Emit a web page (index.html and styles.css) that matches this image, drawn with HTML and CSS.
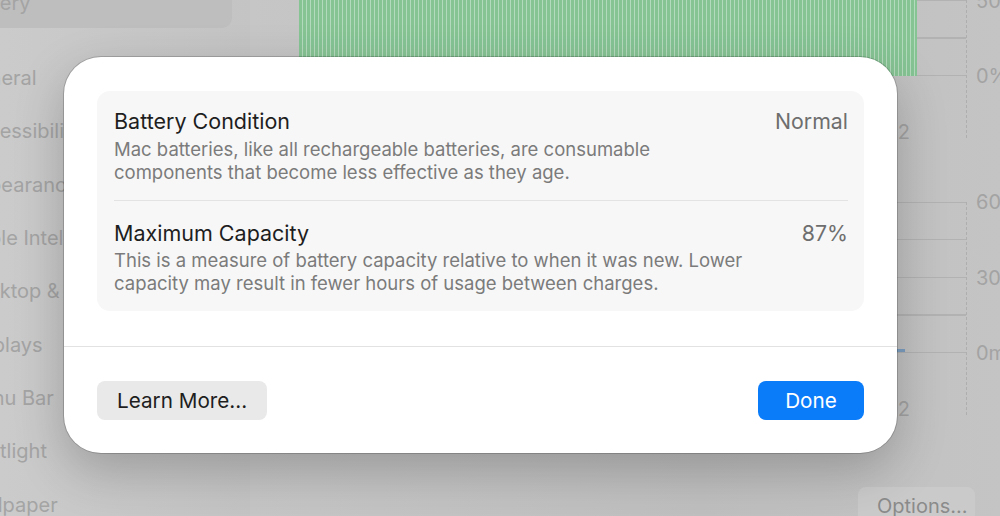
FILE: index.html
```html
<!DOCTYPE html>
<html lang="en">
<head>
    <meta charset="UTF-8">
    <meta name="viewport" content="width=device-width, initial-scale=1.0">
    <title>Battery Health</title>
    <link rel="stylesheet" href="styles.css">
</head>
<body>
    <div class="window">
        <div class="sidebar">
            <div class="sidebar-list">
                <div class="sidebar-item selected">Battery</div>
                <div class="sidebar-item">General</div>
                <div class="sidebar-item">Accessibility</div>
                <div class="sidebar-item">Appearance</div>
                <div class="sidebar-item">Apple Intelligence</div>
                <div class="sidebar-item">Desktop &amp; Dock</div>
                <div class="sidebar-item">Displays</div>
                <div class="sidebar-item">Menu Bar</div>
                <div class="sidebar-item">Spotlight</div>
                <div class="sidebar-item">Wallpaper</div>
            </div>
        </div>

        <div class="main">
            <div class="chart">
                <div class="plot-wrap">
                    <div class="plot">
                        <div class="level-bars"></div>
                    </div>
                    <div class="xlabels"><span>12</span></div>
                </div>
                <div class="ylabels">
                    <span>100%</span>
                    <span>50%</span>
                    <span>0%</span>
                </div>
            </div>

            <div class="chart second">
                <div class="plot-wrap">
                    <div class="plot usage">
                        <div class="usage-bar"></div>
                    </div>
                    <div class="xlabels"><span>12</span></div>
                </div>
                <div class="ylabels">
                    <span>60m</span>
                    <span>30m</span>
                    <span>0m</span>
                </div>
            </div>

            <button class="options-btn">Options...</button>
        </div>
    </div>

    <div class="sheet">
        <div class="group">
            <div class="row">
                <div class="row-text">
                    <div class="row-title">Battery Condition</div>
                    <div class="row-desc">Mac batteries, like all rechargeable batteries, are consumable<br>components that become less effective as they age.</div>
                </div>
                <div class="row-value">Normal</div>
            </div>
            <div class="divider"></div>
            <div class="row">
                <div class="row-text">
                    <div class="row-title">Maximum Capacity</div>
                    <div class="row-desc">This is a measure of battery capacity relative to when it was new. Lower<br>capacity may result in fewer hours of usage between charges.</div>
                </div>
                <div class="row-value">87%</div>
            </div>
        </div>
        <div class="sheet-footer">
            <button class="btn">Learn More...</button>
            <button class="btn primary">Done</button>
        </div>
    </div>
</body>
</html>
```

FILE: styles.css
```css
body {
    margin: 0;
    width: 1000px;
    height: 516px;
    overflow: hidden;
    position: relative;
    font-family: Inter, "Noto Sans", sans-serif;
    background-color: #c3c3c3;
}
.window {
    display: flex;
    height: 516px;
}

/* dimmed settings window behind the sheet */
.sidebar {
    width: 250px;
    flex-shrink: 0;
    background: linear-gradient(to right, #cbcbcb, #c4c4c4);
    overflow: hidden;
}
.sidebar-list {
    margin: -22px 18px 0 -60px;
}
.sidebar-item {
    height: 53.3px;
    padding-left: 23px;
    display: flex;
    align-items: center;
    font-size: 20px;
    color: #a4a4a4;
    white-space: nowrap;
}
.sidebar-item.selected {
    height: 50px;
    margin-bottom: 23.5px;
    background-color: #bebebe;
    border-radius: 10px;
}
.main {
    flex: 1;
    min-width: 0;
    overflow: hidden;
    display: flex;
    flex-direction: column;
    margin-top: -75px;
    background: linear-gradient(to right, #c6c6c6, #bfbfbf 60%, #c4c4c4);
}
.chart {
    display: flex;
    margin-left: 49px;
}
.chart.second {
    margin-top: 64px;
}
.plot-wrap {
    width: 667px;
    flex-shrink: 0;
    border-right: 1px dashed #aeaeae;
}
.plot {
    height: 151px;
    background: repeating-linear-gradient(to bottom, #b2b2b2 0 1px, transparent 1px 37.5px);
}
.level-bars {
    width: 618px;
    height: 151px;
    background: repeating-linear-gradient(to right, #86c494 0 3px, #b4dabd 3px 4px);
}
.plot.usage {
    display: flex;
    justify-content: flex-end;
    align-items: flex-end;
    padding-right: 61px;
    box-sizing: border-box;
}
.usage-bar {
    width: 8px;
    height: 3px;
    margin-bottom: 1px;
    background-color: #7d9fc2;
}
.xlabels {
    height: 62px;
    display: flex;
    justify-content: flex-end;
    padding: 44px 56px 0 0;
    box-sizing: border-box;
    font-size: 20px;
    line-height: 24px;
    color: #a3a3a3;
}
.ylabels {
    height: 171px;
    margin-top: -10px;
    padding-left: 9px;
    display: flex;
    flex-direction: column;
    justify-content: space-between;
    font-size: 20px;
    line-height: 20px;
    color: #a3a3a3;
    white-space: nowrap;
}
.options-btn {
    margin-top: auto;
    margin-bottom: -9px;
    margin-right: 25px;
    align-self: flex-end;
    width: 117px;
    height: 38px;
    padding: 0 0 0 19px;
    text-align: left;
    border: none;
    border-radius: 8px;
    background-color: #cacaca;
    color: #8b8b8b;
    font-family: inherit;
    font-size: 20px;
    white-space: nowrap;
}

/* the sheet */
.sheet {
    position: absolute;
    left: 64px;
    top: 57px;
    width: 833px;
    height: 396px;
    box-sizing: border-box;
    padding-top: 34px;
    display: flex;
    flex-direction: column;
    background-color: #fff;
    border-radius: 37px;
    box-shadow: 0 0 0 1px rgba(0,0,0,0.18), 0 18px 50px rgba(0,0,0,0.22);
}
.group {
    margin: 0 33px;
    background-color: #f7f7f7;
    border-radius: 13px;
}
.row {
    display: flex;
    justify-content: space-between;
    padding: 17px 16px 16px 17px;
}
.row-title {
    font-size: 21.5px;
    line-height: 26px;
    color: #1e1e1e;
}
.row-desc {
    margin-top: 3.5px;
    font-size: 18.5px;
    line-height: 23px;
    color: #7b7b7b;
}
.row-value {
    font-size: 21.3px;
    line-height: 26px;
    color: #6e6e6e;
}
.divider {
    height: 1px;
    margin: 0 16px 2px 17px;
    background-color: #e3e3e3;
}
.sheet-footer {
    margin-top: 35px;
    padding: 34px 33px 0;
    border-top: 1px solid #e2e2e2;
    display: flex;
    justify-content: space-between;
}
.btn {
    height: 39px;
    padding: 0 20px;
    border: none;
    border-radius: 8px;
    background-color: #e9e9e9;
    color: #1e1e1e;
    font-family: inherit;
    font-size: 20.7px;
}
.btn.primary {
    width: 106px;
    background-color: #0b7cf9;
    color: #fff;
}
```
